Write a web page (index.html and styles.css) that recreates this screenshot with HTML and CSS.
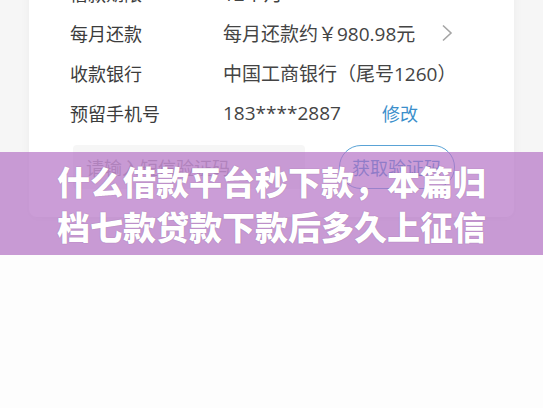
FILE: index.html
```html
<!DOCTYPE html>
<html lang="zh-CN">
<head>
    <meta charset="UTF-8">
    <meta name="viewport" content="width=device-width, initial-scale=1.0">
    <title>什么借款平台秒下款</title>
    <link rel="stylesheet" href="styles.css">
</head>
<body>
    <div class="shot">
        <div class="card">
            <div class="row row-cut">
                <span class="label">借款期限</span>
                <span class="value">12个月</span>
            </div>
            <div class="row">
                <span class="label">每月还款</span>
                <span class="value">每月还款约￥980.98元</span>
                <span class="chevron">
                    <svg width="12" height="18" viewBox="0 0 12 18"><path d="M2 1.5 L10 9 L2 16.5" fill="none" stroke="#a5a5a5" stroke-width="1.6"/></svg>
                </span>
            </div>
            <div class="row">
                <span class="label">收款银行</span>
                <span class="value">中国工商银行（尾号1260）</span>
            </div>
            <div class="row">
                <span class="label">预留手机号</span>
                <span class="value phone">183****2887</span>
                <a href="#" class="edit">修改</a>
            </div>

            <!-- 验证码 -->
            <div class="code-row">
                <div class="code-input">请输入短信验证码</div>
                <button class="code-btn">获取验证码</button>
            </div>
        </div>

        <div class="banner">
            <h1>什么借款平台秒下款，本篇归<br>档七款贷款下款后多久上征信</h1>
        </div>
    </div>
</body>
</html>
```
FILE: styles.css
```css
body {
    margin: 0;
    background: #fdfdfd;
    font-family: "Noto Sans CJK SC", "Noto Sans", sans-serif;
}
.shot {
    position: relative;
    height: 255px;
    background: #f6f6f6;
    overflow: hidden;
}
.card {
    margin-left: 29px;
    width: 485px;
    margin-top: -27px;
    height: 244px;
    background: #ffffff;
    border-radius: 8px;
    box-shadow: 0 2px 10px rgba(0, 0, 0, 0.05);
    box-sizing: border-box;
}
.row {
    display: flex;
    align-items: center;
    height: 40px;
    padding-left: 41px;
    font-size: 18px;
    color: #3c3c3c;
}
.label {
    width: 153px;
    flex-shrink: 0;
}
.value {
    font-family: "Open Sans", "Noto Sans CJK SC", sans-serif;
    font-size: 19px;
    color: #444;
}
.chevron {
    display: flex;
    margin-left: 26px;
}
.phone {
    width: 159px;
}
.edit {
    color: #3b8fcb;
    text-decoration: none;
}
.code-row {
    display: flex;
    align-items: center;
    padding-left: 44px;
    margin-top: 12px;
}
.code-input {
    width: 232px;
    height: 44px;
    background: #f6f6f6;
    border-radius: 4px;
    padding-left: 13px;
    box-sizing: border-box;
    font-size: 18px;
    color: #a6a6a6;
    line-height: 44px;
}
.code-btn {
    margin-left: 34px;
    width: 116px;
    height: 44px;
    border: 1.5px solid #5aa3d6;
    border-radius: 22px;
    background: #fff;
    color: #3b8fcb;
    font-family: inherit;
    font-size: 18px;
    padding: 0;
}
/* Title overlay */
.banner {
    position: absolute;
    left: 0;
    right: 0;
    top: 152px;
    height: 103px;
    background: rgba(181, 116, 198, 0.7);
    display: flex;
    align-items: center;
    justify-content: center;
}
.banner h1 {
    margin: 0;
    color: #fff;
    font-size: 33px;
    font-weight: 900;
    line-height: 45px;
    text-align: center;
    text-shadow: 0 0 1px rgba(60, 20, 70, 0.4);
}
```
